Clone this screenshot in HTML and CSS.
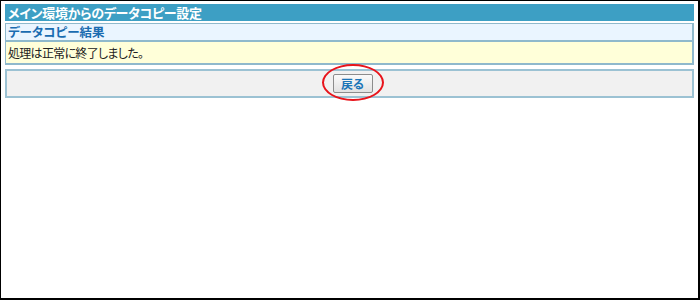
FILE: index.html
```html
<!DOCTYPE html>
<html lang="ja">
<head>
<meta charset="UTF-8">
<title>メイン環境からのデータコピー設定</title>
<link rel="stylesheet" href="styles.css">
</head>
<body>

<div id="frame">
    <div class="page-title">メイン環境からのデータコピー設定</div>
    <div class="result-box">
        <div class="result-head">データコピー結果</div>
        <div class="result-message">処理は正常に終了しました。</div>
    </div>
    <div class="button-panel">
        <span class="mark">
            <button class="button" type="button">戻る</button>
        </span>
    </div>
</div>

</body>
</html>
```

FILE: styles.css
```css
html, body {
    margin: 0;
    padding: 0;
    background-color: #fff;
}

body {
    font-family: "Noto Sans CJK JP", "Noto Sans", sans-serif;
    font-size: 12px;
    font-feature-settings: "palt";
    color: #222;
}

#frame {
    width: 700px;
    height: 300px;
    box-sizing: border-box;
    border: 1px solid #000;
    border-right-width: 2px;
    border-bottom-width: 2px;
    padding: 3px 4px 0 4px;
    display: flex;
    flex-direction: column;
}

.page-title {
    background-color: #3d9fc4;
    color: #fff;
    font-weight: bold;
    font-size: 13px;
    letter-spacing: -0.3px;
    height: 17px;
    line-height: 17px;
    padding-left: 3px;
    margin-bottom: 2px;
}

.result-box {
    border: 1px solid #8fb9cc;
    border-right-width: 2px;
    border-bottom-width: 2px;
}

.result-head {
    background-color: #eaf5ff;
    color: #1a6cb0;
    font-weight: bold;
    font-size: 12.5px;
    height: 16px;
    line-height: 16px;
    padding-left: 2px;
    border-bottom: 2px solid #8fb9cc;
}

.result-message {
    background-color: #ffffd9;
    height: 21px;
    line-height: 21px;
    padding-left: 2px;
    letter-spacing: -0.7px;
}

.button-panel {
    margin-top: 4px;
    height: 25px;
    background-color: #f1f1f1;
    border: 2px solid #9cc2d3;
    display: flex;
    justify-content: center;
    align-items: center;
    padding-left: 6px;
}

.mark {
    position: relative;
    display: inline-block;
}

.mark::after {
    content: "";
    position: absolute;
    left: -11px;
    top: -10px;
    width: 58px;
    height: 33px;
    border: 2px solid #e8141b;
    border-radius: 50%;
}

.button {
    font-family: inherit;
    font-feature-settings: "palt";
    font-size: 12px;
    font-weight: bold;
    color: #1a75b8;
    background: linear-gradient(#fafafa, #e2e2e2);
    border: 1px solid #8c8c8c;
    border-radius: 2px;
    width: 40px;
    height: 19px;
    padding: 0;
    line-height: 16px;
}
```
